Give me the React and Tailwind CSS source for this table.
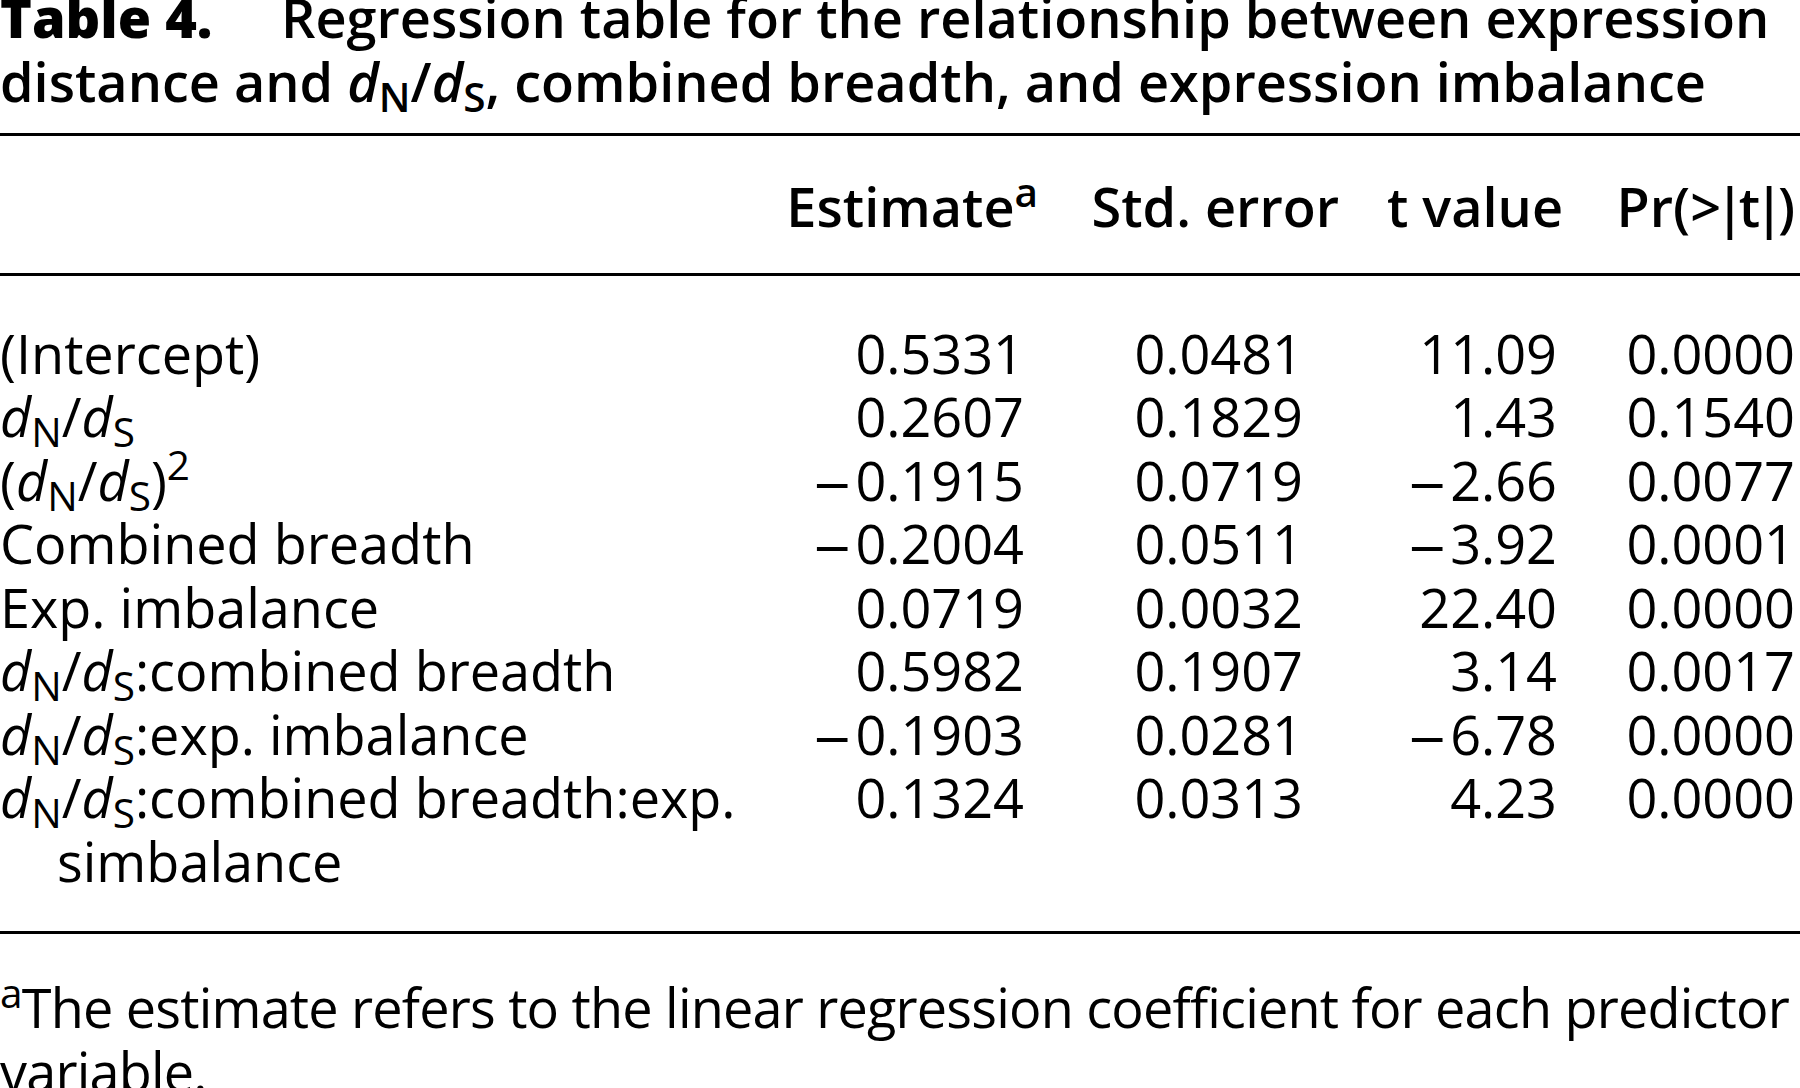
import React from 'react';

const Ratio = () => (
  <>
    <i>d</i>
    <sub>N</sub>/<i>d</i>
    <sub>S</sub>
  </>
);

// negative values use a long dash, as in the typeset original
const Num = ({ v }) =>
  v.startsWith('-') ? (
    <>
      <span className="inline-block origin-left scale-x-[1.35] mr-[14px]">{'\u2013'}</span>
      {v.slice(1)}
    </>
  ) : (
    v
  );

const rows = [
  { label: '(Intercept)', est: '0.5331', se: '0.0481', t: '11.09', p: '0.0000' },
  { label: <Ratio />, est: '0.2607', se: '0.1829', t: '1.43', p: '0.1540' },
  {
    label: (
      <>
        (<Ratio />)<sup>2</sup>
      </>
    ),
    est: '-0.1915',
    se: '0.0719',
    t: '-2.66',
    p: '0.0077',
  },
  { label: 'Combined breadth', est: '-0.2004', se: '0.0511', t: '-3.92', p: '0.0001' },
  { label: 'Exp. imbalance', est: '0.0719', se: '0.0032', t: '22.40', p: '0.0000' },
  {
    label: (
      <>
        <Ratio />:combined breadth
      </>
    ),
    est: '0.5982',
    se: '0.1907',
    t: '3.14',
    p: '0.0017',
  },
  {
    label: (
      <>
        <Ratio />:exp. imbalance
      </>
    ),
    est: '-0.1903',
    se: '0.0281',
    t: '-6.78',
    p: '0.0000',
  },
  {
    label: (
      <>
        <div>
          <Ratio />:combined breadth:exp.
        </div>
        <div className="pl-[57px]">simbalance</div>
      </>
    ),
    est: '0.1324',
    se: '0.0313',
    t: '4.23',
    p: '0.0000',
  },
];

const cols = 'grid grid-cols-[760px_280px_300px_225px_235px]';

export default function App() {
  return (
    <div className="w-[1800px] h-[1088px] overflow-hidden bg-white text-black font-['Open_Sans',sans-serif] text-[54px] leading-[63.5px] whitespace-nowrap">
      {/* caption */}
      <div className="-mt-[15px] leading-[64px] font-semibold">
        <div>
          <span className="inline-block w-[281px] font-extrabold">Table 4.</span>
          Regression table for the relationship between expression
        </div>
        <div>
          distance and <Ratio />, combined breadth, and expression imbalance
        </div>
      </div>

      <div className="mt-[20px] h-[3px] bg-black" />

      {/* header */}
      <div className={`${cols} mt-[39px] font-semibold`}>
        <div />
        <div className="text-right pr-[2px]">
          Estimate<sup>a</sup>
        </div>
        <div className="text-right pr-[1px]">Std. error</div>
        <div className="text-right pr-[2px]">t value</div>
        <div className="text-right pr-[5px]">
          Pr(&gt;<span className="-mx-[6px]">|</span>t<span className="-mx-[6px]">|</span>)
        </div>
      </div>

      <div className="mt-[34px] h-[3px] bg-black" />

      {/* body */}
      <div className="mt-[46px]">
        {rows.map((r, i) => (
          <div key={i} className={cols}>
            <div>{r.label}</div>
            <div className="text-right pr-[16px]">
              <Num v={r.est} />
            </div>
            <div className="text-right pr-[37px]">
              <Num v={r.se} />
            </div>
            <div className="text-right pr-[8px]">
              <Num v={r.t} />
            </div>
            <div className="text-right pr-[5px]">
              <Num v={r.p} />
            </div>
          </div>
        ))}
      </div>

      <div className="mt-[38px] h-[3px] bg-black" />

      {/* footnote */}
      <div className="mt-[42px] tracking-[-0.8px]">
        <div>
          <sup>a</sup>The estimate refers to the linear regression coefficient for each predictor
        </div>
        <div>variable.</div>
      </div>
    </div>
  );
}
